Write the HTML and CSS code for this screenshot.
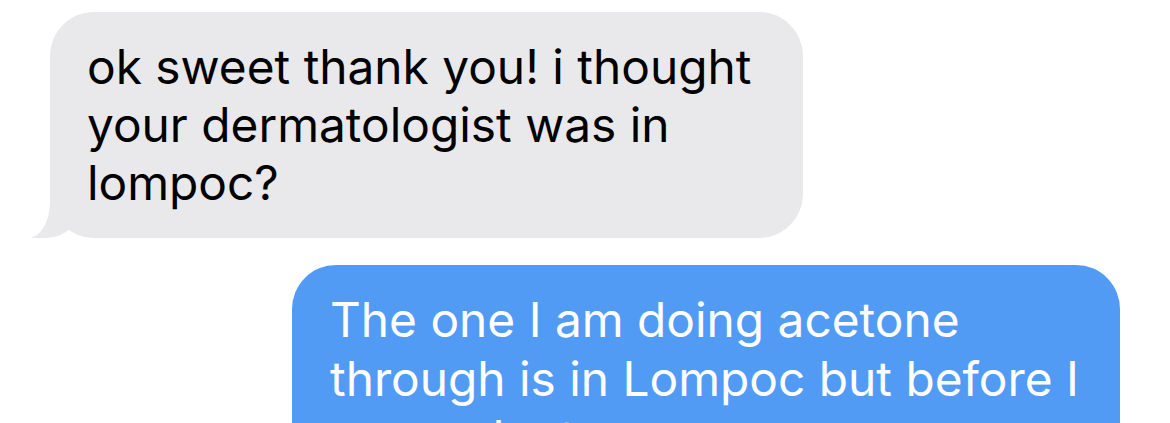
FILE: index.html
```html
<!DOCTYPE html>
<html lang="en">
<head>
    <meta charset="UTF-8">
    <meta name="viewport" content="width=device-width, initial-scale=1.0">
    <title>Messages</title>
    <link rel="stylesheet" href="styles.css">
</head>
<body>
    <div class="thread">
        <div class="bubble them">ok sweet thank you! i thought your dermatologist was in lompoc?</div>
        <div class="bubble me">The one I am doing acetone through is in Lompoc but before I saw a doctor on campus</div>
    </div>
</body>
</html>
```

FILE: styles.css
```css
body {
    margin: 0;
    background-color: #fff;
    font-family: Inter, 'Noto Sans', sans-serif;
    overflow: hidden;
}
.thread {
    display: flex;
    flex-direction: column;
    gap: 27px;
    padding-top: 12px;
}
.bubble {
    position: relative;
    box-sizing: border-box;
    font-size: 47.8px;
    line-height: 58px;
    border-radius: 44px;
}
.them {
    align-self: flex-start;
    margin-left: 50px;
    width: 753px;
    padding: 26px 30px 26px 37px;
    background-color: #e9e9eb;
    color: #000;
}
/* tail: gray blob, then a white cutout over its outer edge */
.them::before {
    content: "";
    position: absolute;
    bottom: 0;
    left: -18px;
    width: 50px;
    height: 44px;
    background-color: #e9e9eb;
    border-bottom-right-radius: 36px;
}
.them::after {
    content: "";
    position: absolute;
    bottom: 0;
    left: -40px;
    width: 40px;
    height: 46px;
    background-color: #fff;
    border-bottom-right-radius: 22px 36px;
}
.me {
    margin-left: 292px;
    width: 828px;
    padding: 26px 28px 24px 38px;
    line-height: 59px;
    background-color: #529bf4;
    color: #fff;
}
```
